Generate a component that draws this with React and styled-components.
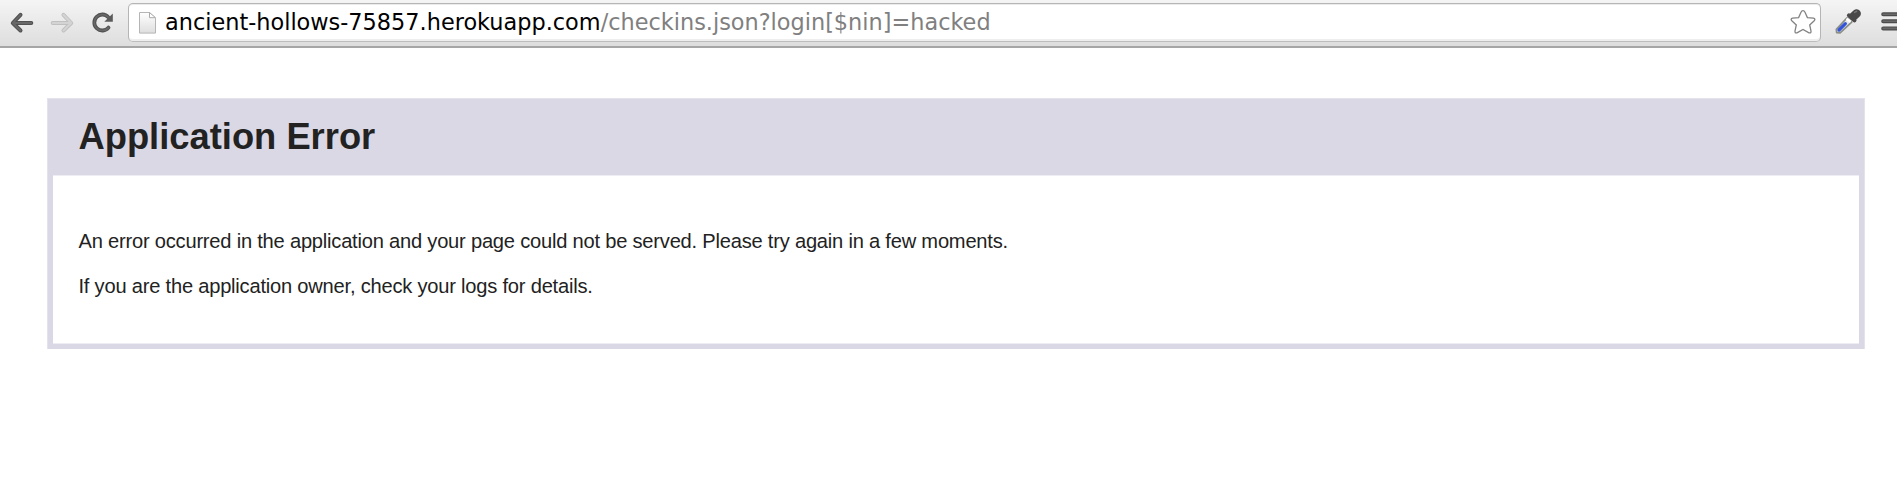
import React from 'react';
import styled, { createGlobalStyle } from 'styled-components';

const GlobalStyle = createGlobalStyle`
  * { box-sizing: border-box; }
  body {
    margin: 0;
    overflow: hidden;
    background: #fff;
    color: #222;
    font-family: "Liberation Sans", Arial, sans-serif;
  }
`;

const Window = styled.div`
  min-height: 477px;
`;

const Toolbar = styled.header`
  display: flex;
  align-items: flex-start;
  height: 48px;
  overflow: hidden;
  border-bottom: 2px solid #a6a6a6;
  background: linear-gradient(#f5f5f5, #dedede);
`;

const Navigation = styled.nav`
  display: flex;
  flex: none;
  width: 128px;
`;

const AddressBar = styled.div`
  display: flex;
  flex: none;
  width: 1693px;
  height: 39px;
  margin-top: 3px;
  border: 1px solid #b5b5b5;
  border-bottom-color: #bdbdbd;
  border-radius: 5px;
  background: #fff;
  box-shadow: inset 0 1px 0 #ececec, inset 0 -2px 0 #eee;
`;

const Url = styled.div`
  flex: 1;
  padding-left: 8px;
  color: #808080;
  font: 22.4px/36px "DejaVu Sans", sans-serif;
  white-space: nowrap;
`;

const Host = styled.span`
  color: #000;
`;

const Glyph = styled.svg`
  display: block;
  flex: none;
`;

const Extensions = styled.div`
  display: flex;
  flex: none;
  width: 76px;
`;

const ErrorPanel = styled.main`
  margin: 50px 32px 0 47px;
  border: 1px solid #e4e2ec;
  border-bottom: 0;
`;

const PanelHeader = styled.div`
  height: 70px;
  padding: 17px 0 0 30.5px;
  background: #dad8e4;
`;

const Title = styled.h1`
  margin: 0;
  font-size: 36.35px;
  line-height: 42px;
`;

const PanelBody = styled.div`
  height: 180px;
  padding: 54px 25.5px 0;
  border: 5px solid #dad8e4;
  border-top-width: 6px;
  box-shadow: inset 0 1px 0 #eeedf3, inset 0 -1px 0 #eeedf3;
`;

const Message = styled.p`
  margin: 0;
  font-size: 20.1px;
  line-height: 25px;
  letter-spacing: -0.21px;
  white-space: nowrap;

  & + & {
    margin-top: 20px;
  }
`;

function BackIcon() {
  return (
    <Glyph width="44" height="46" viewBox="0 0 44 46" fill="none" strokeLinecap="round" strokeLinejoin="round">
      <path d="M20.5 14.8 12.8 23l7.7 7.5M13 23h18.3" stroke="#515151" strokeWidth="4" />
      <path d="M20.5 14.8 12.8 23l7.7 7.5M13 23h18.3" stroke="#686868" strokeWidth="1.8" />
    </Glyph>
  );
}

function ForwardIcon() {
  return (
    <Glyph width="40" height="46" viewBox="44 0 40 46" fill="none" strokeLinecap="round" strokeLinejoin="round">
      <path d="M63.5 14.8 71.2 23l-7.7 7.5M71 23H52.7" stroke="#c0c0c0" strokeWidth="4" />
      <path d="M63.5 14.8 71.2 23l-7.7 7.5M71 23H52.7" stroke="#d4d4d4" strokeWidth="2.1" />
    </Glyph>
  );
}

function ReloadIcon() {
  return (
    <Glyph width="44" height="46" viewBox="84 0 44 46" fill="none">
      <path d="M108.3 17.2A8 8 0 1 0 108.5 27.6" stroke="#515151" strokeWidth="3.8" strokeLinecap="round" />
      <path d="M108.3 17.2A8 8 0 1 0 108.5 27.6" stroke="#686868" strokeWidth="1.7" strokeLinecap="round" />
      <path d="M112.8 13.5v8.3h-8.5z" fill="#5b5b5b" />
    </Glyph>
  );
}

function PageIcon() {
  return (
    <Glyph width="28" height="36" viewBox="129 4 28 36">
      <defs>
        <linearGradient id="paper" x2="0" y2="1">
          <stop stopColor="#fff" />
          <stop offset="1" stopColor="#dedede" />
        </linearGradient>
      </defs>
      <path d="M139.5 12.5h10l6 5.7v14.9h-16z" fill="url(#paper)" stroke="#b5b5b5" />
      <path d="M149.5 12.5v5.2h6z" fill="#fff" stroke="#aaa" />
    </Glyph>
  );
}

function StarIcon() {
  return (
    <Glyph width="34" height="36" viewBox="1786 4 34 36" fill="none">
      <path
        d="M1803 10.6q1.3 0 1.9 1.5l2.5 5.5 6 .6q2.5.6.8 2.5l-4.5 4.2 1.3 6.1q.3 2.5-2 1.8l-6-3.3-6 3.3q-2.3.7-2-1.8l1.3-6.1-4.5-4.2q-1.7-1.9.8-2.5l6-.6 2.5-5.5q.6-1.5 1.9-1.5z"
        stroke="#838383"
        strokeWidth="1.3"
      />
    </Glyph>
  );
}

function EyedropperIcon() {
  return (
    <Glyph width="52" height="46" viewBox="1821 0 52 46" strokeLinecap="round" strokeLinejoin="round">
      <path d="m1846.8 18-10.4 11.4.3 3.2 3.4.2 11.6-10.6z" fill="#e6e9ed" stroke="#8d8d88" strokeWidth="1.8" />
      <path d="m1845.4 23.6-6.4 6.4" stroke="#3354d8" strokeWidth="3.2" />
      <path d="m1847.4 19.4 2.4 1.7" stroke="#fff" strokeWidth="2.6" />
      <path d="m1849 15.4 5.4 4.9" stroke="#4a4a4a" strokeWidth="4.2" />
      <path d="m1853.6 16.2 3-2.6" stroke="#484848" strokeWidth="8.6" />
      <path d="m1854.6 12.4 2-1" stroke="#777" strokeWidth="1.5" />
    </Glyph>
  );
}

function MenuIcon() {
  return (
    <Glyph width="24" height="46" viewBox="1873 0 24 46" strokeLinecap="round">
      <path d="M1883.2 14.2h19m-19 7.1h19m-19 7.1h19" stroke="#4c4c4c" strokeWidth="4" />
      <path d="M1883.2 14.2h19m-19 7.1h19m-19 7.1h19" stroke="#696969" strokeWidth="1.6" />
    </Glyph>
  );
}

export default function App() {
  return (
    <Window>
      <GlobalStyle />
      <Toolbar>
        <Navigation>
          <BackIcon />
          <ForwardIcon />
          <ReloadIcon />
        </Navigation>
        <AddressBar>
          <PageIcon />
          <Url><Host>ancient-hollows-75857.herokuapp.com</Host>/checkins.json?login[$nin]=hacked</Url>
          <StarIcon />
        </AddressBar>
        <Extensions>
          <EyedropperIcon />
          <MenuIcon />
        </Extensions>
      </Toolbar>
      <ErrorPanel>
        <PanelHeader>
          <Title>Application Error</Title>
        </PanelHeader>
        <PanelBody>
          <Message>An error occurred in the application and your page could not be served. Please try again in a few moments.</Message>
          <Message>If you are the application owner, check your logs for details.</Message>
        </PanelBody>
      </ErrorPanel>
    </Window>
  );
}
